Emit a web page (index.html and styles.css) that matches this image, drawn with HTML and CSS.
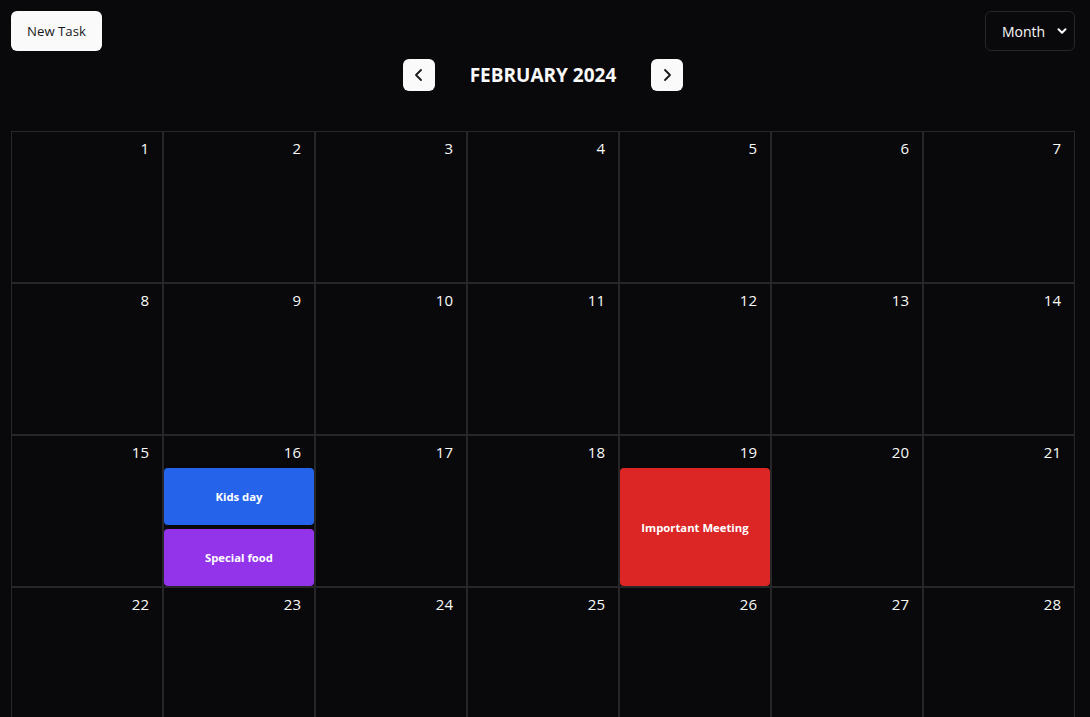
FILE: index.html
```html
<!DOCTYPE html>
<html lang="en">
<head>
<meta charset="utf-8">
<title>Calendar</title>
<link rel="stylesheet" href="styles.css">
</head>
<body>
<div class="page">
  <header class="toolbar">
    <button class="btn-primary">New Task</button>
    <div class="view-select">
      <span>Month</span>
      <svg width="10" height="10" viewBox="0 0 10 10"><path d="M1.5 3.2 L5 6.7 L8.5 3.2" fill="none" stroke="#fafafa" stroke-width="2" stroke-linecap="round" stroke-linejoin="round"/></svg>
    </div>
  </header>
  <nav class="month-nav">
    <button class="nav-btn" aria-label="Previous month"><svg width="16" height="16" viewBox="0 0 16 16"><path d="M10 3 L5 8 L10 13" fill="none" stroke="#18181b" stroke-width="1.8" stroke-linecap="round" stroke-linejoin="round"/></svg></button>
    <h1 class="month-title">FEBRUARY 2024</h1>
    <button class="nav-btn" aria-label="Next month"><svg width="16" height="16" viewBox="0 0 16 16"><path d="M6 3 L11 8 L6 13" fill="none" stroke="#18181b" stroke-width="1.8" stroke-linecap="round" stroke-linejoin="round"/></svg></button>
  </nav>
  <div class="grid">
    <div class="cell"><div class="day">1</div></div>
    <div class="cell"><div class="day">2</div></div>
    <div class="cell"><div class="day">3</div></div>
    <div class="cell"><div class="day">4</div></div>
    <div class="cell"><div class="day">5</div></div>
    <div class="cell"><div class="day">6</div></div>
    <div class="cell"><div class="day">7</div></div>
    <div class="cell"><div class="day">8</div></div>
    <div class="cell"><div class="day">9</div></div>
    <div class="cell"><div class="day">10</div></div>
    <div class="cell"><div class="day">11</div></div>
    <div class="cell"><div class="day">12</div></div>
    <div class="cell"><div class="day">13</div></div>
    <div class="cell"><div class="day">14</div></div>
    <div class="cell"><div class="day">15</div></div>
    <div class="cell"><div class="day">16</div>
      <div class="events">
        <div class="event blue">Kids day</div>
        <div class="event purple">Special food</div>
      </div>
    </div>
    <div class="cell"><div class="day">17</div></div>
    <div class="cell"><div class="day">18</div></div>
    <div class="cell"><div class="day">19</div>
      <div class="events">
        <div class="event red">Important Meeting</div>
      </div>
    </div>
    <div class="cell"><div class="day">20</div></div>
    <div class="cell"><div class="day">21</div></div>
    <div class="cell"><div class="day">22</div></div>
    <div class="cell"><div class="day">23</div></div>
    <div class="cell"><div class="day">24</div></div>
    <div class="cell"><div class="day">25</div></div>
    <div class="cell"><div class="day">26</div></div>
    <div class="cell"><div class="day">27</div></div>
    <div class="cell"><div class="day">28</div></div>
  </div>
</div>
</body>
</html>
```

FILE: styles.css
```css
* { box-sizing: border-box; }
html, body {
  margin: 0;
  background: #09090b;
  color: #fafafa;
  font-family: "Open Sans", "Noto Sans", "Liberation Sans", sans-serif;
  overflow: hidden;
}
.page {
  width: 1064px;
  margin-left: 11px;
  padding-top: 11px;
}
.toolbar {
  display: flex;
  justify-content: space-between;
  align-items: center;
  height: 40px;
}
.btn-primary {
  height: 40px;
  width: 91px;
  border: none;
  border-radius: 6px;
  background: #fafafa;
  color: #18181b;
  font-family: inherit;
  font-size: 13.2px;
  padding: 0;
  cursor: pointer;
}
.view-select {
  height: 40px;
  width: 90px;
  border: 1px solid #27272a;
  border-radius: 6px;
  display: flex;
  align-items: center;
  justify-content: space-between;
  padding: 0 7px 0 16px;
  font-size: 14px;
  font-weight: 500;
}
.month-nav {
  display: flex;
  justify-content: center;
  align-items: center;
  gap: 35px;
  margin-top: 8px;
  height: 32px;
}
.nav-btn {
  width: 32px;
  height: 32px;
  border: none;
  border-radius: 6px;
  background: #fafafa;
  display: flex;
  align-items: center;
  justify-content: center;
  padding: 0;
}
.month-title {
  margin: 0;
  font-size: 19px;
  font-weight: 700;
  letter-spacing: 0;
}
.grid {
  margin-top: 40px;
  display: grid;
  grid-template-columns: repeat(7, 152px);
  grid-auto-rows: 152px;
}
.cell {
  border: 1px solid #27272a;
  display: flex;
  flex-direction: column;
}
.day {
  height: 32px;
  text-align: right;
  padding: 6px 13px 0 0;
  font-size: 15px;
  line-height: 20px;
}
.events {
  flex: 1;
  display: flex;
  flex-direction: column;
  gap: 4px;
}
.event {
  flex: 1;
  border-radius: 4px;
  display: flex;
  align-items: center;
  justify-content: center;
  font-size: 11.3px;
  font-weight: 700;
  color: #fff;
}
.blue { background: #2563eb; }
.purple { background: #9333ea; }
.red { background: #dc2626; }
```
